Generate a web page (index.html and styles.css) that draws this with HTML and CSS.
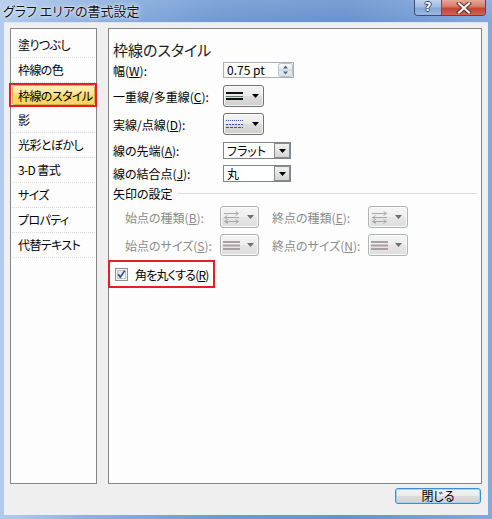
FILE: index.html
```html
<!DOCTYPE html>
<html lang="ja">
<head>
<meta charset="utf-8">
<title>グラフ エリアの書式設定</title>
<link rel="stylesheet" href="styles.css">
</head>
<body>
<div class="window">
  <div class="titlebar">
    <span class="title">グラフ エリアの書式設定</span>
    <div class="caption-buttons">
      <span class="cap-btn help">?</span>
      <span class="cap-btn close">
        <svg width="16" height="12" viewBox="0 0 16 12"><path d="M3 1.5 L13 10.5 M13 1.5 L3 10.5" stroke="#5b2a22" stroke-width="4" stroke-linecap="square"/><path d="M3 1.5 L13 10.5 M13 1.5 L3 10.5" stroke="#ffffff" stroke-width="2.2" stroke-linecap="square"/></svg>
      </span>
    </div>
  </div>
  <div class="client">
    <div class="panes">
      <ul class="nav">
        <li>塗りつぶし</li>
        <li>枠線の色</li>
        <li class="selected"><span class="sel">枠線のスタイル</span></li>
        <li>影</li>
        <li>光彩とぼかし</li>
        <li>3-D 書式</li>
        <li>サイズ</li>
        <li>プロパティ</li>
        <li>代替テキスト</li>
      </ul>
      <div class="content">
        <h1 class="heading">枠線のスタイル</h1>

        <div class="row r1">
          <span class="label">幅(<u>W</u>):</span>
          <div class="spin">
            <span class="val">0.75 pt</span>
            <svg class="spinbtn" width="15" height="14" viewBox="0 0 15 14">
              <defs><linearGradient id="sg" x1="0" y1="0" x2="0" y2="1"><stop offset="0" stop-color="#f6f8fa"/><stop offset="1" stop-color="#d9e0e8"/></linearGradient></defs>
              <rect x="0.5" y="0.5" width="14" height="13" rx="2" fill="url(#sg)" stroke="#b9c2cc"/>
              <path d="M1 7 H14" stroke="#c3cad3"/>
              <path d="M5 5.5 L7.5 2.5 L10 5.5Z" fill="#4d6491"/>
              <path d="M5 8.5 L7.5 11.5 L10 8.5Z" fill="#4d6491"/>
            </svg>
          </div>
        </div>

        <div class="row r2">
          <span class="label">一重線/多重線(<u>C</u>):</span>
          <div class="dd">
            <svg class="ico" width="17" height="10" viewBox="0 0 17 10"><rect x="0" y="1" width="17" height="2" fill="#111"/><rect x="0" y="5" width="17" height="1" fill="#5d7a66"/><rect x="0" y="7" width="17" height="2" fill="#111"/></svg>
            <svg class="tri" width="7" height="4" viewBox="0 0 7 4"><path d="M0 0 H7 L3.5 4Z" fill="#000"/></svg>
          </div>
        </div>

        <div class="row r3">
          <span class="label">実線/点線(<u>D</u>):</span>
          <div class="dd">
            <svg class="ico" width="17" height="10" viewBox="0 0 17 10"><path d="M0 1.5 H17" stroke="#3552a8" stroke-dasharray="1 1"/><path d="M0 5.5 H17" stroke="#3552a8" stroke-dasharray="2 1"/><path d="M0 8.5 H17" stroke="#3552a8" stroke-dasharray="3 1"/></svg>
            <svg class="tri" width="7" height="4" viewBox="0 0 7 4"><path d="M0 0 H7 L3.5 4Z" fill="#000"/></svg>
          </div>
        </div>

        <div class="row r4">
          <span class="label">線の先端(<u>A</u>):</span>
          <div class="combo">
            <span class="cval">フラット</span>
            <span class="combo-btn"><svg width="7" height="4" viewBox="0 0 7 4"><path d="M0 0 H7 L3.5 4Z" fill="#000"/></svg></span>
          </div>
        </div>

        <div class="row r5">
          <span class="label">線の結合点(<u>J</u>):</span>
          <div class="combo">
            <span class="cval">丸</span>
            <span class="combo-btn"><svg width="7" height="4" viewBox="0 0 7 4"><path d="M0 0 H7 L3.5 4Z" fill="#000"/></svg></span>
          </div>
        </div>

        <div class="group-title"><span>矢印の設定</span></div>

        <div class="arow a1">
          <span class="alabel">始点の種類(<u>B</u>):</span>
          <div class="dd dis">
            <svg class="ico" width="17" height="13" viewBox="0 0 17 13"><path d="M1 2.5 H15 M12.5 0.5 L15.5 2.5 L12.5 4.5" stroke="#a9a9a9" fill="none"/><path d="M2 6.5 H16 M4.5 4.5 L1.5 6.5 L4.5 8.5" stroke="#a9a9a9" fill="none"/><path d="M2 10.5 H15 M4.5 8.5 L1.5 10.5 L4.5 12.5 M12.5 8.5 L15.5 10.5 L12.5 12.5" stroke="#a9a9a9" fill="none"/><rect x="3" y="11" width="2" height="1" fill="#e08a8a"/></svg>
            <svg class="tri" width="7" height="4" viewBox="0 0 7 4"><path d="M0 0 H7 L3.5 4Z" fill="#6e6e6e"/></svg>
          </div>
          <span class="alabel second">終点の種類(<u>E</u>):</span>
          <div class="dd dis w40">
            <svg class="ico" width="17" height="13" viewBox="0 0 17 13"><path d="M1 2.5 H15 M12.5 0.5 L15.5 2.5 L12.5 4.5" stroke="#a9a9a9" fill="none"/><path d="M2 6.5 H16 M4.5 4.5 L1.5 6.5 L4.5 8.5" stroke="#a9a9a9" fill="none"/><path d="M2 10.5 H15 M4.5 8.5 L1.5 10.5 L4.5 12.5 M12.5 8.5 L15.5 10.5 L12.5 12.5" stroke="#a9a9a9" fill="none"/><rect x="3" y="11" width="2" height="1" fill="#e08a8a"/></svg>
            <svg class="tri" width="7" height="4" viewBox="0 0 7 4"><path d="M0 0 H7 L3.5 4Z" fill="#6e6e6e"/></svg>
          </div>
        </div>

        <div class="arow a2">
          <span class="alabel">始点のサイズ(<u>S</u>):</span>
          <div class="dd dis">
            <svg class="ico" width="17" height="10" viewBox="0 0 17 10"><rect x="0" y="1" width="17" height="2" fill="#a3a3a3"/><rect x="0" y="4.5" width="17" height="2" fill="#b59c9c"/><rect x="0" y="8" width="17" height="2" fill="#a3a3a3"/></svg>
            <svg class="tri" width="7" height="4" viewBox="0 0 7 4"><path d="M0 0 H7 L3.5 4Z" fill="#6e6e6e"/></svg>
          </div>
          <span class="alabel second">終点のサイズ(<u>N</u>):</span>
          <div class="dd dis w40">
            <svg class="ico" width="17" height="10" viewBox="0 0 17 10"><rect x="0" y="1" width="17" height="2" fill="#a3a3a3"/><rect x="0" y="4.5" width="17" height="2" fill="#b59c9c"/><rect x="0" y="8" width="17" height="2" fill="#a3a3a3"/></svg>
            <svg class="tri" width="7" height="4" viewBox="0 0 7 4"><path d="M0 0 H7 L3.5 4Z" fill="#6e6e6e"/></svg>
          </div>
        </div>

        <div class="check-row">
          <span class="checkbox">
            <svg width="13" height="13" viewBox="0 0 13 13">
              <defs><linearGradient id="cg" x1="0" y1="0" x2="1" y2="1"><stop offset="0" stop-color="#dcdcdc"/><stop offset="1" stop-color="#ffffff"/></linearGradient></defs>
              <rect x="0.5" y="0.5" width="12" height="12" fill="#f4f4f4" stroke="#8e8f8f"/>
              <rect x="2.5" y="2.5" width="8" height="8" fill="url(#cg)" stroke="#c4c4c4"/>
              <path d="M3.2 6.3 L5.3 9.2 L9.8 2.6" stroke="#24479a" stroke-width="1.6" fill="none"/>
            </svg>
          </span>
          <span class="clabel">角を丸くする(<u>R</u>)</span>
        </div>
      </div>
    </div>
    <div class="footer">
      <button class="btn" type="button">閉じる</button>
    </div>
  </div>
</div>
</body>
</html>
```

FILE: styles.css
```css
* {
  box-sizing: border-box;
  margin: 0;
  padding: 0;
}

html, body {
  width: 492px;
  height: 519px;
  overflow: hidden;
}

body {
  font-family: "Noto Sans CJK JP", "Noto Sans", sans-serif;
  font-size: 12px;
  color: #000;
  background: #6f98d0;
  font-feature-settings: "palt";
}

.window {
  width: 492px;
  height: 519px;
  display: flex;
  flex-direction: column;
  background:
    linear-gradient(to bottom, rgba(255,255,255,0.12), rgba(255,255,255,0) 22px),
    linear-gradient(to right, #b3cbeb 0%, #8eb0df 18%, #6f99d3 45%, #6792ce 70%, #84a8dc 100%);
}

.titlebar {
  height: 22px;
  display: flex;
  justify-content: space-between;
  align-items: flex-start;
  flex: none;
}

.title {
  padding-left: 3px;
  font-size: 13px;
  line-height: 21px;
  color: #111;
  text-shadow: 0 0 6px #e8f0fb, 0 0 3px #e8f0fb, 0 0 1px #fff;
}

.caption-buttons {
  display: flex;
  margin-right: 6px;
  height: 16px;
  border: 1px solid #3d4f6d;
  border-top: none;
  border-radius: 0 0 4px 4px;
  overflow: hidden;
}

.cap-btn {
  display: flex;
  align-items: center;
  justify-content: center;
  height: 15px;
}

.help {
  width: 27px;
  background: linear-gradient(to bottom, #c2d4ee 0%, #a3bde3 45%, #86a6d6 55%, #9bb8e2 100%);
  border-right: 1px solid #4b5c78;
  color: #fff;
  font-family: "DejaVu Sans", sans-serif;
  font-weight: bold;
  font-size: 12px;
  line-height: 15px;
  text-shadow: 1px 0 0 #38465e, -1px 0 0 #38465e, 0 1px 0 #38465e, 0 -1px 0 #38465e;
}

.close {
  width: 43px;
  background: linear-gradient(to bottom, #e6a898 0%, #d67966 45%, #c4442f 55%, #d2654f 100%);
}

.client {
  flex: 1;
  margin: 0 4px 4px 4px;
  background: #efefef;
  border-top: 1px solid #dfe6ef;
  padding: 5px 6px 0 6px;
  display: flex;
  flex-direction: column;
}

.panes {
  display: flex;
  gap: 11px;
  height: 456px;
}

.nav {
  width: 87px;
  border: 1px solid #858585;
  background: #fdfdfd;
  list-style: none;
  padding: 4px 1px 0 1px;
  letter-spacing: -0.6px;
}

.nav li {
  position: relative;
  height: 25px;
  line-height: 24px;
  padding-left: 6px;
  border-bottom: 1px dotted #dcdcdc;
  white-space: nowrap;
}

.nav li.selected {
  padding: 2px 0;
  border-bottom-color: transparent;
}

.nav li.selected .sel {
  display: block;
  height: 100%;
  padding-left: 5px;
  line-height: 19px;
  border: 1px solid #dcae4e;
  border-radius: 2px;
  background: linear-gradient(to bottom, #fef3bf 0%, #fde28c 45%, #fcd663 55%, #fbd567 100%);
}

.nav li.selected::after {
  content: "";
  position: absolute;
  left: -3px;
  right: -2px;
  top: 0;
  bottom: 0;
  border: 2px solid #ec1c24;
}

.content {
  width: 374px;
  border: 1px solid #858585;
  background: #fdfdfd;
  padding: 11px 4px 0 4px;
}

.heading {
  font-size: 15px;
  font-weight: normal;
  line-height: 20px;
  height: 20px;
  color: #1a1a1a;
}

.row {
  display: flex;
  align-items: center;
}

.label {
  width: 110px;
  flex: none;
  white-space: nowrap;
}

.r1 { margin-top: 2px; height: 16px; }
.r2 { margin-top: 7px; height: 22px; }
.r3 { margin-top: 6px; height: 22px; }
.r4 { margin-top: 7px; height: 17px; }
.r5 { margin-top: 6px; height: 17px; }

.spin {
  width: 71px;
  height: 16px;
  border: 1px solid #a7aeb6;
  background: #fff;
  display: flex;
  align-items: center;
  justify-content: space-between;
  padding: 0 0 0 3px;
  line-height: 14px;
}

.dd {
  width: 41px;
  height: 22px;
  border: 1px solid #717171;
  border-radius: 3px;
  background: linear-gradient(to bottom, #f3f3f3 0%, #ebebeb 48%, #dcdcdc 52%, #d0d0d0 100%);
  box-shadow: inset 0 0 0 1px rgba(255,255,255,0.75);
  display: flex;
  align-items: center;
  padding-left: 2px;
  flex: none;
}

.dd .ico {
  flex: none;
}

.dd .tri {
  margin-left: 9px;
  flex: none;
}

.dd.dis {
  width: 39px;
  border-color: #adb2b5;
  background: linear-gradient(to bottom, #f5f5f5 0%, #eeeeee 48%, #e5e5e5 52%, #dedede 100%);
}

.dd.dis .tri {
  margin-left: 7px;
}

.dd.dis.w40 {
  width: 40px;
}

.combo {
  width: 68px;
  height: 17px;
  border: 1px solid #7f858f;
  background: #fff;
  display: flex;
  align-items: center;
  padding-left: 3px;
  line-height: 15px;
}

.combo-btn {
  margin-left: auto;
  width: 16px;
  height: 15px;
  border: 1px solid #8a8a8a;
  background: linear-gradient(to bottom, #f0f0f0 0%, #e4e4e4 50%, #d4d4d4 100%);
  display: flex;
  align-items: center;
  justify-content: center;
}

.combo-btn svg {
  margin-top: 1px;
}

.group-title {
  margin-top: 3px;
  height: 16px;
  display: flex;
  align-items: center;
  gap: 5px;
}

.group-title::after {
  content: "";
  flex: 1;
  border-top: 1px solid #d9dde2;
  margin-top: 1px;
}

.arow {
  display: flex;
  align-items: center;
  height: 22px;
  padding-left: 12px;
  color: #8b8b8b;
}

.a1 { margin-top: 5px; }
.a2 { margin-top: 6px; }

.alabel {
  width: 95px;
  flex: none;
  white-space: nowrap;
}

.alabel.second {
  width: 96px;
  margin-left: 13px;
}

.check-row {
  margin-top: 4px;
  margin-left: -5px;
  width: 107px;
  height: 28px;
  border: 2px solid #ec1c24;
  display: flex;
  align-items: center;
  padding-left: 5px;
}

.checkbox {
  display: flex;
  width: 13px;
  height: 13px;
}

.clabel {
  margin-left: 7px;
  white-space: nowrap;
  letter-spacing: -0.8px;
}

.footer {
  display: flex;
  justify-content: flex-end;
  padding-top: 4px;
  padding-right: 1px;
}

.btn {
  width: 86px;
  height: 16px;
  border: 1px solid #3d8ed0;
  border-radius: 3px;
  background: linear-gradient(to bottom, #f4f4f4 0%, #ebebeb 48%, #dcdcdc 52%, #d2d2d2 100%);
  box-shadow: inset 0 0 0 1px #9fd5f5;
  font-family: "Noto Sans CJK JP", "Noto Sans", sans-serif;
  font-feature-settings: "palt";
  font-size: 12px;
  line-height: 14px;
  color: #000;
}
```
